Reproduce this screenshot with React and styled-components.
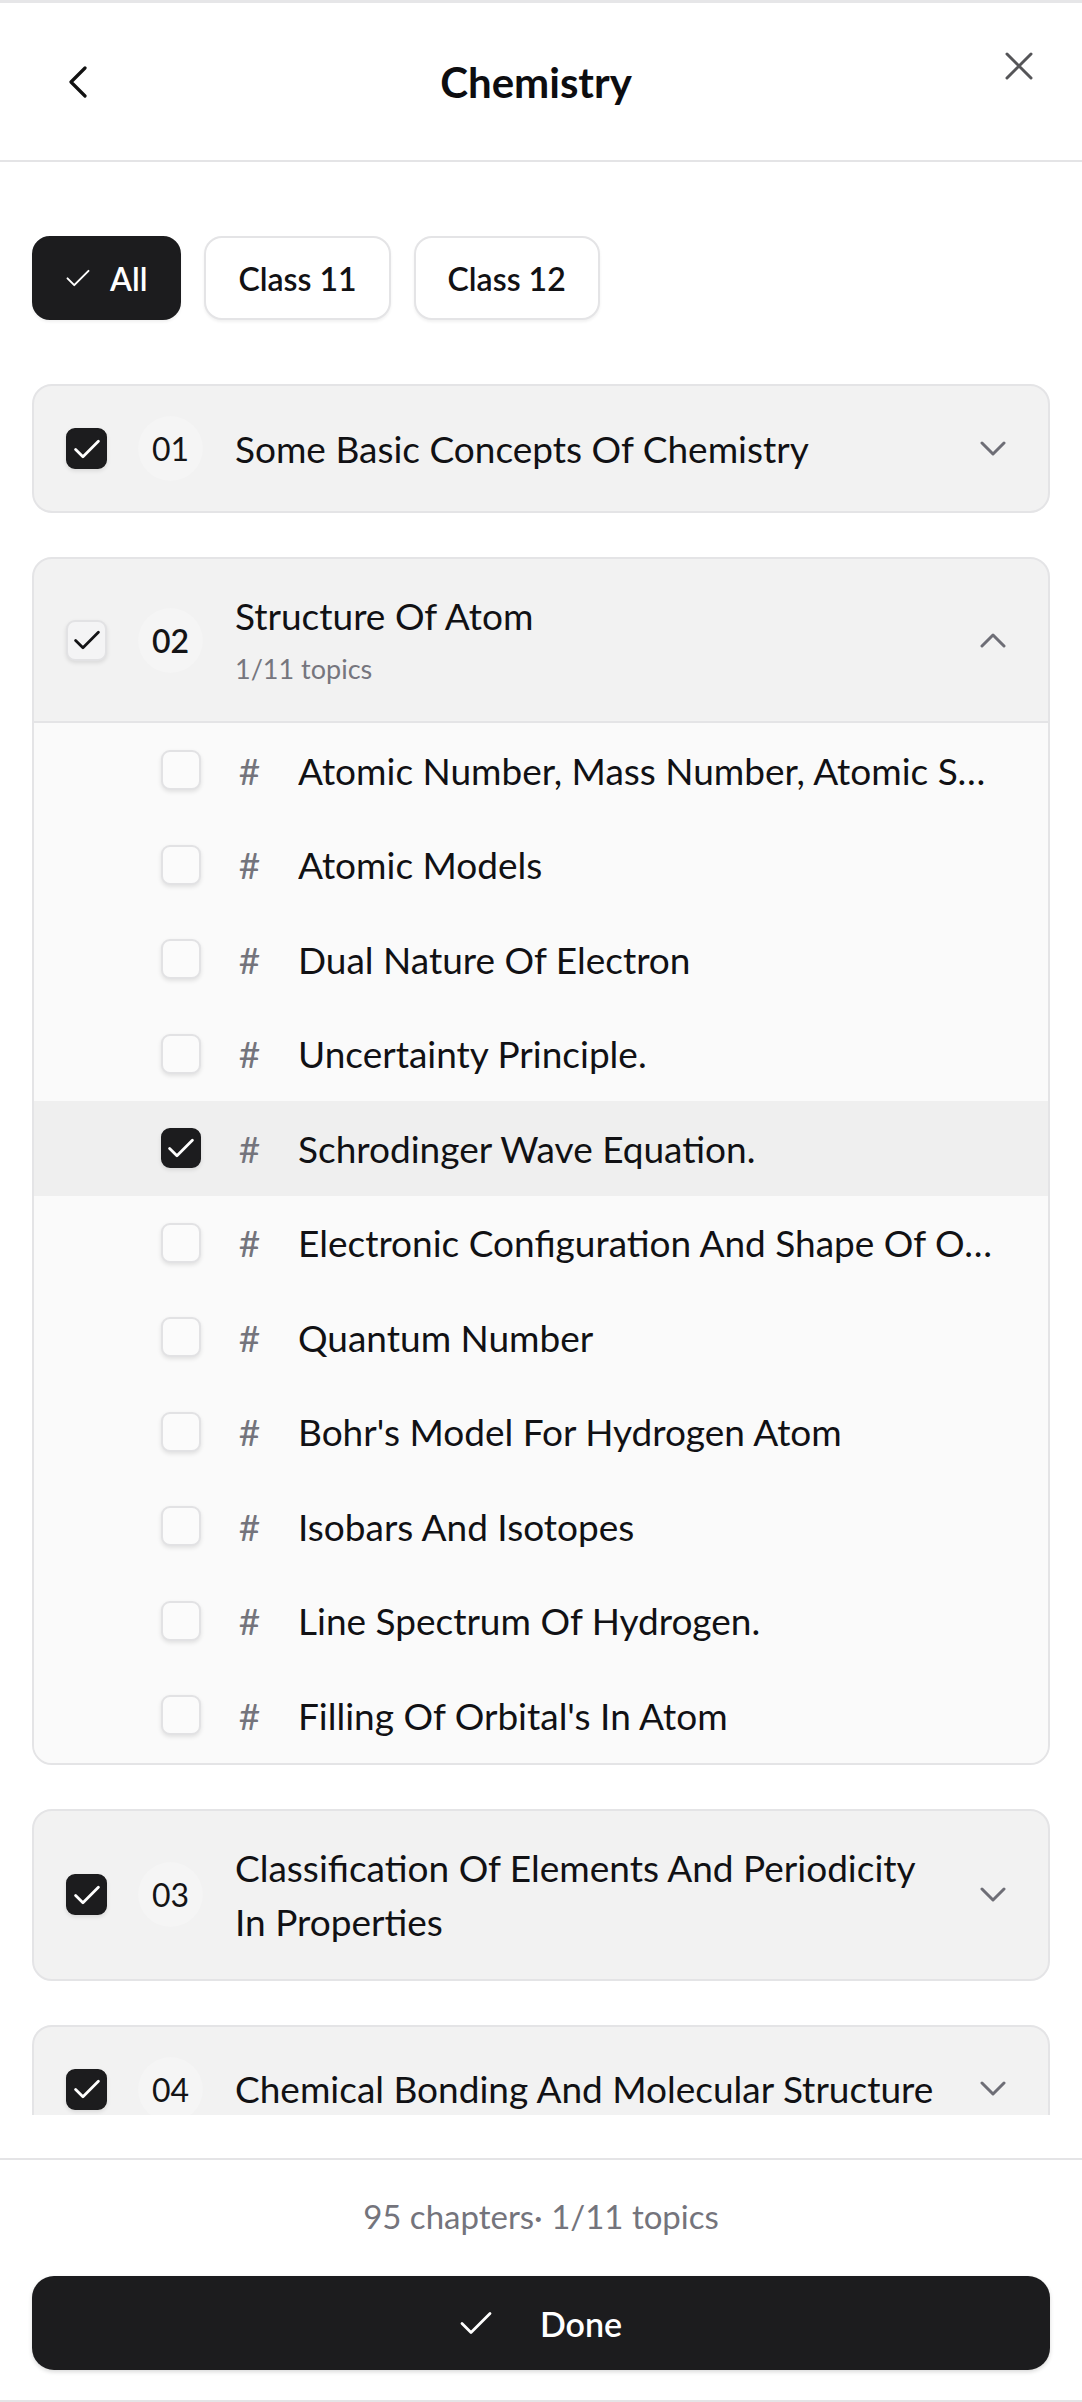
import React from 'react';
import styled, { createGlobalStyle } from 'styled-components';

const Global = createGlobalStyle`
  html, body { margin: 0; padding: 0; background: #fff; }
  body { font-family: Lato, "Noto Sans", sans-serif; color: #111114; }
  * { box-sizing: border-box; }
`;

const Page = styled.div`
  width: 1082px;
  height: 2402px;
  display: flex;
  flex-direction: column;
  background: #fff;
  overflow: hidden;
`;

const Header = styled.header`
  flex: none;
  height: 162px;
  border-top: 3px solid #e6e6e8;
  border-bottom: 2px solid #e4e4e6;
  display: grid;
  grid-template-columns: 1fr auto 1fr;
  align-items: center;
  padding: 0 35px 0 50px;
`;

const IconButton = styled.button`
  width: 56px;
  height: 56px;
  border: none;
  background: transparent;
  padding: 0;
  display: flex;
  align-items: center;
  justify-content: center;
  justify-self: ${(p) => (p.$end ? 'end' : 'start')};
  align-self: ${(p) => (p.$top ? 'start' : 'center')};
  margin-top: ${(p) => (p.$top ? '35px' : '0')};
`;

const Title = styled.h1`
  margin: 0 25px 0 0;
  font-size: 42px;
  font-weight: 700;
  line-height: 1;
  color: #0d0d10;
`;

const Main = styled.main`
  flex: none;
  height: 1953px;
  overflow: hidden;
  padding: 74px 32px 0;
`;

const ChipRow = styled.div`
  display: flex;
  gap: 23px;
`;

const Chip = styled.button`
  height: 84px;
  padding: 0 32px;
  border-radius: 18px;
  border: 2px solid ${(p) => (p.$active ? '#1c1c1e' : '#e4e4e6')};
  background: ${(p) => (p.$active ? '#1c1c1e' : '#fff')};
  color: ${(p) => (p.$active ? '#fff' : '#111114')};
  box-shadow: 0 2px 3px rgba(0, 0, 0, 0.06);
  font-family: inherit;
  font-size: 32px;
  font-weight: 600;
  display: flex;
  align-items: center;
  gap: 20px;
`;

const CardList = styled.div`
  margin-top: 64px;
  display: flex;
  flex-direction: column;
  gap: 44px;
`;

const Card = styled.section`
  border: 2px solid #e4e4e6;
  border-radius: 20px;
  background: #f2f2f2;
  overflow: hidden;
`;

const CardHeader = styled.div`
  display: flex;
  align-items: center;
  padding: 30px 37px 30px 32px;
  border-bottom: ${(p) => (p.$open ? '2px solid #e4e4e6' : 'none')};
`;

const Box = styled.span`
  flex: none;
  width: ${(p) => p.$size}px;
  height: ${(p) => p.$size}px;
  border-radius: 9px;
  display: flex;
  align-items: center;
  justify-content: center;
  background: ${(p) => (p.$state === 'checked' ? '#1c1c1e' : p.$state === 'partial' ? '#f4f4f5' : '#fbfbfb')};
  border: 2px solid ${(p) => (p.$state === 'checked' ? '#1c1c1e' : '#e2e2e4')};
  box-shadow: 0 2px 4px rgba(0, 0, 0, 0.1);
`;

const NumBadge = styled.span`
  flex: none;
  width: 65px;
  height: 65px;
  border-radius: 50%;
  margin: 0 32px 0 31px;
  background: rgba(255, 255, 255, 0.22);
  display: flex;
  align-items: center;
  justify-content: center;
  font-size: 32px;
  font-weight: ${(p) => (p.$strong ? 600 : 400)};
  color: #141416;
`;

const TitleBlock = styled.div`
  flex: 1;
  min-width: 0;
  max-width: 708px;
  margin-right: auto;
`;

const ChapterName = styled.div`
  font-size: 37px;
  line-height: 54px;
  color: #111114;
`;

const SubText = styled.div`
  margin-top: 4px;
  font-size: 27px;
  line-height: 44px;
  color: #76767e;
`;

const ChevronBox = styled.span`
  flex: none;
  width: 36px;
  display: flex;
  justify-content: center;
  margin-left: 30px;
`;

const TopicList = styled.div`
  background: #fafafa;
`;

const TopicRow = styled.div`
  height: 94.5px;
  display: flex;
  align-items: center;
  padding: 0 46px 0 127px;
  background: ${(p) => (p.$active ? '#efefef' : 'transparent')};
`;

const Hash = styled.span`
  flex: none;
  width: 25px;
  margin: 0 36px;
  font-size: 37px;
  color: #74747c;
  text-align: center;
`;

const TopicName = styled.span`
  flex: 1;
  min-width: 0;
  font-size: 37px;
  color: #111114;
  white-space: nowrap;
  overflow: hidden;
  text-overflow: ellipsis;
`;

const Footer = styled.footer`
  flex: none;
  margin-top: 43px;
  border-top: 2px solid #e4e4e6;
  border-bottom: 2px solid #e4e4e6;
  padding: 36px 32px 30px;
  display: flex;
  flex-direction: column;
  gap: 40px;
`;

const Summary = styled.div`
  text-align: center;
  font-size: 33px;
  line-height: 40px;
  color: #74747c;
`;

const DoneButton = styled.button`
  height: 94px;
  border: none;
  border-radius: 22px;
  background: #1c1c1e;
  color: #fff;
  font-family: inherit;
  font-size: 34px;
  font-weight: 600;
  display: flex;
  align-items: center;
  justify-content: center;
  gap: 48px;
  box-shadow: 0 2px 4px rgba(0, 0, 0, 0.15);
`;

const BackIcon = () => (
  <svg width="20" height="32" viewBox="0 0 20 32" fill="none">
    <polyline points="17,2 3,16 17,30" stroke="#111" strokeWidth="3.2" strokeLinecap="round" strokeLinejoin="round" />
  </svg>
);

const CloseIcon = () => (
  <svg width="28" height="28" viewBox="0 0 28 28" fill="none">
    <path d="M2 2 L26 26 M26 2 L2 26" stroke="#555558" strokeWidth="3" strokeLinecap="round" />
  </svg>
);

const Chevron = ({ up }) => (
  <svg width="26" height="16" viewBox="0 0 26 16" fill="none">
    <polyline
      points={up ? '2,14 13,3 24,14' : '2,2 13,13 24,2'}
      stroke="#6e6e76"
      strokeWidth="3"
      strokeLinecap="round"
      strokeLinejoin="round"
    />
  </svg>
);

const Check = ({ w, h, color, sw }) => (
  <svg width={w} height={h} viewBox="0 0 32 24" fill="none">
    <polyline points="2,12.5 11,21.5 30,2.5" stroke={color} strokeWidth={sw} strokeLinecap="round" strokeLinejoin="round" />
  </svg>
);

const Checkbox = ({ state, size }) => (
  <Box $state={state} $size={size}>
    {state !== 'empty' && <Check w={26} h={20} color={state === 'checked' ? '#fff' : '#141416'} sw={3.4} />}
  </Box>
);

const topics = [
  'Atomic Number, Mass Number, Atomic Species',
  'Atomic Models',
  'Dual Nature Of Electron',
  'Uncertainty Principle.',
  'Schrodinger Wave Equation.',
  'Electronic Configuration And Shape Of Orbitals',
  'Quantum Number',
  "Bohr's Model For Hydrogen Atom",
  'Isobars And Isotopes',
  'Line Spectrum Of Hydrogen.',
  "Filling Of Orbital's In Atom",
];

const chapters = [
  { num: '01', name: 'Some Basic Concepts Of Chemistry', state: 'checked' },
  { num: '02', name: 'Structure Of Atom', state: 'partial', open: true, sub: '1/11 topics' },
  { num: '03', name: 'Classification Of Elements And Periodicity In Properties', state: 'checked' },
  { num: '04', name: 'Chemical Bonding And Molecular Structure', state: 'checked' },
];

export default function App() {
  return (
    <Page>
      <Global />
      <Header>
        <IconButton aria-label="Back">
          <BackIcon />
        </IconButton>
        <Title>Chemistry</Title>
        <IconButton aria-label="Close" $end $top>
          <CloseIcon />
        </IconButton>
      </Header>
      <Main>
        <ChipRow>
          <Chip $active>
            <Check w={24} h={18} color="#fff" sw={2.6} />
            All
          </Chip>
          <Chip>Class 11</Chip>
          <Chip>Class 12</Chip>
        </ChipRow>
        <CardList>
          {chapters.map((c) => (
            <Card key={c.num}>
              <CardHeader $open={c.open}>
                <Checkbox state={c.state} size={41} />
                <NumBadge $strong={c.open}>{c.num}</NumBadge>
                <TitleBlock>
                  <ChapterName>{c.name}</ChapterName>
                  {c.sub && <SubText>{c.sub}</SubText>}
                </TitleBlock>
                <ChevronBox>
                  <Chevron up={c.open} />
                </ChevronBox>
              </CardHeader>
              {c.open && (
                <TopicList>
                  {topics.map((t, i) => (
                    <TopicRow key={t} $active={i === 4}>
                      <Checkbox state={i === 4 ? 'checked' : 'empty'} size={40} />
                      <Hash>#</Hash>
                      <TopicName>{t}</TopicName>
                    </TopicRow>
                  ))}
                </TopicList>
              )}
            </Card>
          ))}
        </CardList>
      </Main>
      <Footer>
        <Summary>95 chapters· 1/11 topics</Summary>
        <DoneButton>
          <Check w={32} h={24} color="#fff" sw={2.8} />
          Done
        </DoneButton>
      </Footer>
    </Page>
  );
}
